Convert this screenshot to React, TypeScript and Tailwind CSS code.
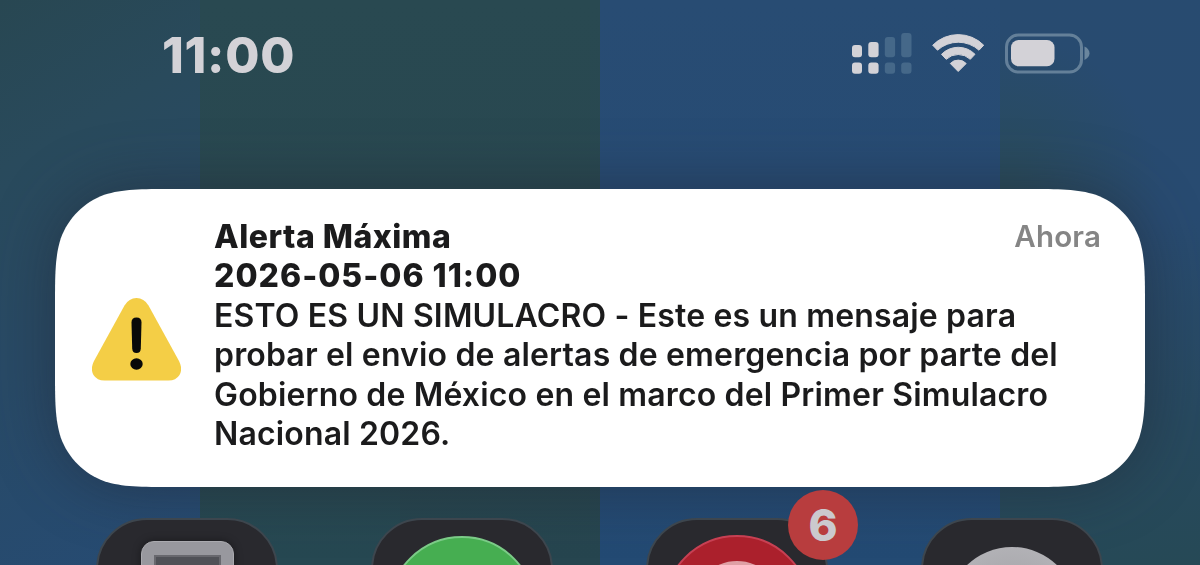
const MESSAGE = [
  "ESTO ES UN SIMULACRO - Este es un mensaje para",
  "probar el envio de alertas de emergencia por parte del",
  "Gobierno de México en el marco del Primer Simulacro",
  "Nacional 2026.",
];

const APPS = [
  { id: "device", badge: 0, art: <DeviceArt /> },
  { id: "green", badge: 0, art: <GreenArt /> },
  { id: "red", badge: 6, art: <RedArt /> },
  { id: "silver", badge: 0, art: <SilverArt /> },
];

export default function App() {
  return (
    <main className="relative h-[565px] w-[1200px] overflow-hidden bg-[#28464f] font-['Inter',sans-serif]">
      <Wallpaper />
      <div className="relative flex flex-col">
        <StatusBar />
        <Notification />
        <AppRow />
      </div>
    </main>
  );
}

function Wallpaper() {
  return (
    <div className="absolute inset-0 grid grid-cols-[200px_200px_200px_400px_200px]">
      <div className="bg-[linear-gradient(150deg,#284752_0%,#294a5c_25%,#284a66_55%,#264b74_100%)]" />
      <div className="bg-[linear-gradient(180deg,#294951_0%,#284750_60%,#264852_100%)]" />
      <div className="bg-[linear-gradient(180deg,#294951_0%,#284750_60%,#26454f_100%)]" />
      <div className="bg-[linear-gradient(180deg,#284c73_0%,#264b75_60%,#234a73_100%)]" />
      <div className="bg-[radial-gradient(ellipse_160px_160px_at_0%_34%,#294b5a_0%,#294b5a00_100%),linear-gradient(175deg,#284b70_0%,#284b71_40%,#27495f_75%,#264956_100%)]" />
    </div>
  );
}

function StatusBar() {
  return (
    <header className="flex h-[189px] items-start justify-between pt-[25px] pr-[110.5px] pl-[162px] text-[#d3d2d7]">
      <time className="text-[49.5px] leading-[60px] font-extrabold tracking-[0.7px]">11:00</time>
      <div className="flex pt-[8px]">
        <SignalIcon />
        <WifiIcon />
        <BatteryIcon />
      </div>
    </header>
  );
}

function Notification() {
  return (
    <div className="mx-[55px] drop-shadow-[0_0_32px_rgba(30,32,40,0.45)]">
      <article className="flex h-[298px] bg-white pt-[27.5px] pr-[44px] pl-[37px] text-[#1b1b1c] [clip-path:path('M119_0_C85_0_67.7_0_49.3_5.8_C29.1_13.2_13.2_29.1_5.8_49.3_C0_67.7_0_85_0_119_V179_C0_213_0_230.3_5.8_248.7_C13.2_268.9_29.1_284.8_49.3_292.2_C67.7_298_85_298_119_298_H971_C1005_298_1022.3_298_1040.7_292.2_C1060.9_284.8_1076.8_268.9_1084.2_248.7_C1090_230.3_1090_213_1090_179_V119_C1090_85_1090_67.7_1084.2_49.3_C1076.8_29.1_1060.9_13.2_1040.7_5.8_C1022.3_0_1005_0_971_0_Z')]">
        <WarningIcon />
        <div className="ml-[33px] flex-1 text-[32px] leading-[39.6px] font-semibold tracking-[0.16px] whitespace-nowrap">
          <div className="flex justify-between">
            <h1 className="font-extrabold tracking-[0.5px]">Alerta Máxima</h1>
            <span className="text-[29.5px] text-[#858585]">Ahora</span>
          </div>
          <p className="font-extrabold tracking-[1px]">2026-05-06 11:00</p>
          {MESSAGE.map((line) => (
            <p key={line}>{line}</p>
          ))}
        </div>
      </article>
    </div>
  );
}

function AppRow() {
  return (
    <nav className="flex gap-[93px] pt-[31px] pl-[96px]">
      {APPS.map((app) => (
        <div key={app.id} className="relative h-[182px] w-[182px] shrink-0">
          <div className="flex h-full justify-center overflow-hidden rounded-[51px] border-2 border-[#3d464e] bg-[#29292e]">
            {app.art}
          </div>
          {app.badge > 0 && (
            <span className="absolute -top-[28px] left-[142px] flex h-[70px] w-[70px] items-center justify-center rounded-full bg-[#b83d3e] text-[44px] font-extrabold text-[#cbc9ce]">
              {app.badge}
            </span>
          )}
        </div>
      ))}
    </nav>
  );
}

function DeviceArt() {
  return (
    <div className="mt-[21px] h-[120px] w-[93px] rounded-[13px] border border-[#aaaaaf] bg-[#98989e] px-[12px] pt-[13px] shadow-[0_0_8px_rgba(0,0,0,0.4)]">
      <div className="h-[80px] border-2 border-[#68686e] bg-[#505157]" />
    </div>
  );
}

function GreenArt() {
  return <div className="mt-[16px] h-[148px] w-[148px] rounded-full border-2 border-[#7bcb87] bg-[#46ae51]" />;
}

function RedArt() {
  return (
    <div className="mt-[15px] flex h-[148px] w-[148px] justify-center rounded-full border-2 border-[#c74053] bg-[#ab202c] pt-[24px]">
      <div className="h-[90px] w-[90px] rounded-full bg-[#dfa0a5]" />
    </div>
  );
}

function SilverArt() {
  return <div className="mt-[27px] h-[130px] w-[130px] rounded-full bg-[radial-gradient(circle,#a9a9ad_40%,#bab9be_100%)]" />;
}

function SignalIcon() {
  return (
    <svg width="60" height="42" viewBox="0 0 60 42" fill="currentColor">
      <rect x="0" y="12" width="10" height="12.3" rx="3" />
      <rect x="16.3" y="9" width="10.3" height="15.3" rx="3" />
      <rect x="0" y="29.5" width="10" height="11.3" rx="3" />
      <rect x="16.3" y="29.5" width="10.3" height="11.3" rx="3" />
      <g fill="#456889">
        <rect x="32.8" y="4" width="10.3" height="20.3" rx="3" />
        <rect x="49.2" y="0" width="10.3" height="24.3" rx="3" />
        <rect x="32.8" y="29.5" width="10.3" height="11.3" rx="3" />
        <rect x="49.2" y="29.5" width="10.3" height="11.3" rx="3" />
      </g>
    </svg>
  );
}

function WifiIcon() {
  return (
    <svg className="ml-[20px]" width="53" height="42" viewBox="0 0 53 42" fill="currentColor" stroke="currentColor" strokeLinejoin="round">
      <path d="M.7 12.2A36 36 0 0 1 51.7 12.2L47 17.2A31 31 0 0 0 5.5 17.2Z" />
      <path d="M9.5 21.3A23.5 23.5 0 0 1 43 21.3L38.3 26.3A17.5 17.5 0 0 0 14.2 26.3Z" />
      <path d="M18.3 30.5A11 11 0 0 1 34.2 30.5L26.2 38.5Z" />
    </svg>
  );
}

function BatteryIcon() {
  return (
    <svg className="ml-[20px]" width="85" height="42" viewBox="0 0 85 42">
      <rect x="1.5" y="2" width="75" height="37" rx="12" fill="none" stroke="#648099" strokeWidth="3" />
      <rect x="6" y="7" width="43.5" height="26.3" rx="7.5" fill="currentColor" />
      <path d="M79.5 13.5Q84.5 16 84.5 20.3Q84.5 24.5 79.5 27Z" fill="#6a869e" />
    </svg>
  );
}

function WarningIcon() {
  return (
    <svg className="mt-[81px] shrink-0" width="89" height="83" viewBox="0 0 89 83">
      <path d="M32.5 7.5Q37 0 44.5 0Q52 0 56.5 7.5L87 63Q91 71 87.5 77Q84 82.5 76.5 82.5H12.5Q5 82.5 1.5 77Q-2 71 2 63Z" fill="#f4ce46" />
      <path d="M39.5 24.5Q39.5 19.5 44.5 19.5Q49.5 19.5 49.5 24.5L48.8 50.5Q48.6 55 44.5 55Q40.4 55 40.2 50.5Z" fill="#090909" />
      <ellipse cx="44.5" cy="66" rx="6.2" ry="5.7" fill="#090909" />
    </svg>
  );
}
